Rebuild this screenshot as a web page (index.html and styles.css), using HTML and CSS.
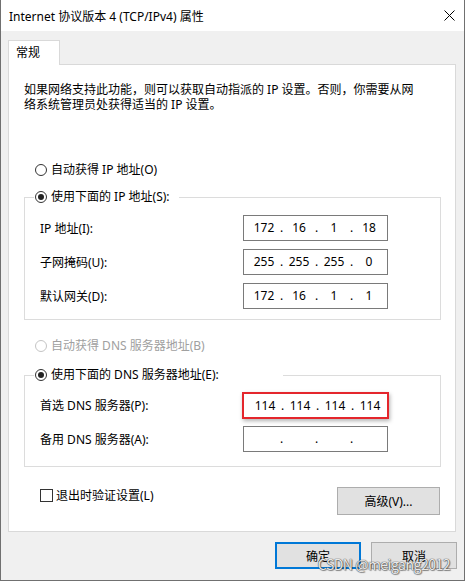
FILE: index.html
```html
<!DOCTYPE html>
<html lang="zh-CN">
<head>
  <meta charset="UTF-8">
  <title>Internet 协议版本 4 (TCP/IPv4) 属性</title>
  <link rel="stylesheet" href="styles.css">
</head>
<body>
  <div class="window">
    <div class="titlebar">
      <span class="title">Internet 协议版本 4 (TCP/IPv4) 属性</span>
      <svg class="close" width="11" height="11" viewBox="0 0 11 11">
        <path d="M0.5 0.5 L10.5 10.5 M10.5 0.5 L0.5 10.5" stroke="#000" stroke-width="1" fill="none"/>
      </svg>
    </div>

    <div class="body">
      <div class="tab">常规</div>

      <div class="panel">
        <p class="intro">如果网络支持此功能，则可以获取自动指派的 IP 设置。否则，你需要从网<br>络系统管理员处获得适当的 IP 设置。</p>

        <div class="radio first"><span class="mark"></span>自动获得 IP 地址(O)</div>

        <fieldset class="group ip-group">
          <legend class="legend-ip"><div class="radio"><span class="mark on"></span>使用下面的 IP 地址(S):</div></legend>
          <div class="row">
            <span class="label">IP 地址(I):</span>
            <div class="ipbox"><span>172</span><i>.</i><span>16</span><i>.</i><span>1</span><i>.</i><span>18</span></div>
          </div>
          <div class="row">
            <span class="label">子网掩码(U):</span>
            <div class="ipbox"><span>255</span><i>.</i><span>255</span><i>.</i><span>255</span><i>.</i><span>0</span></div>
          </div>
          <div class="row">
            <span class="label">默认网关(D):</span>
            <div class="ipbox"><span>172</span><i>.</i><span>16</span><i>.</i><span>1</span><i>.</i><span>1</span></div>
          </div>
        </fieldset>

        <div class="radio disabled dns-auto"><span class="mark"></span>自动获得 DNS 服务器地址(B)</div>

        <fieldset class="group dns-group">
          <legend class="legend-dns"><div class="radio"><span class="mark on"></span>使用下面的 DNS 服务器地址(E):</div></legend>
          <div class="row">
            <span class="label">首选 DNS 服务器(P):</span>
            <div class="ipbox marked"><span>114</span><i>.</i><span>114</span><i>.</i><span>114</span><i>.</i><span>114</span></div>
          </div>
          <div class="row">
            <span class="label">备用 DNS 服务器(A):</span>
            <div class="ipbox"><span></span><i>.</i><span></span><i>.</i><span></span><i>.</i><span></span></div>
          </div>
        </fieldset>

        <div class="panel-foot">
          <div class="check"><span class="box"></span>退出时验证设置(L)</div>
          <button class="btn advanced">高级(V)...</button>
        </div>
      </div>

      <div class="actions">
        <button class="btn default">确定</button>
        <button class="btn">取消</button>
      </div>
    </div>

    <div class="watermark">CSDN @meigang2012</div>
  </div>
</body>
</html>
```

FILE: styles.css
```css
body {
  margin: 0;
  font-family: 'Noto Sans', 'Noto Sans CJK SC', sans-serif;
  font-size: 12px;
  color: #000;
  background: #fff;
}
.window {
  position: relative;
  width: 465px;
  height: 581px;
  box-sizing: border-box;
  border: 1px solid #707070;
  border-top: none;
  background: #f0f0f0;
  display: flex;
  flex-direction: column;
}
.titlebar {
  height: 31px;
  flex: none;
  background: #fff;
  display: flex;
  align-items: center;
  justify-content: space-between;
  padding: 0 9px 0 8px;
}
.close {
  margin-top: -1px;
}
.body {
  padding: 9px 7px 0 7px;
}
.tab {
  position: relative;
  z-index: 1;
  width: 52px;
  height: 25px;
  box-sizing: border-box;
  border: 1px solid #d9d9d9;
  border-bottom: none;
  background: #fff;
  padding: 4px 0 0 7px;
  line-height: 16px;
}
.panel {
  margin-top: -1px;
  width: 448px;
  height: 468px;
  box-sizing: border-box;
  border: 1px solid #d9d9d9;
  background: #fff;
  padding: 0 14px 0 15px;
}
.intro {
  margin: 17px 0 0 0;
  line-height: 15px;
}
.radio {
  display: flex;
  align-items: center;
  height: 20px;
  line-height: 20px;
  white-space: nowrap;
}
.radio.first {
  margin: 48px 0 0 11px;
}
.radio.dns-auto {
  margin: 16px 0 0 11px;
}
.radio.disabled {
  color: #a0a0a0;
}
.mark {
  width: 12px;
  height: 12px;
  box-sizing: border-box;
  border: 1px solid #333;
  border-radius: 50%;
  margin-right: 4px;
  display: flex;
  align-items: center;
  justify-content: center;
  background: #fff;
}
.mark.on::after {
  content: "";
  width: 6px;
  height: 6px;
  border-radius: 50%;
  background: #222;
}
.disabled .mark {
  border-color: #c4c4c4;
}
.group {
  margin: 7px 0 0 0;
  min-inline-size: 0;
  border: 1px solid #dcdcdc;
  padding: 8px 14px 10px 15px;
}
.dns-group {
  margin-top: 9px;
  padding-top: 7px;
  padding-bottom: 14px;
}
.group legend {
  padding: 0 0 0 1px;
  margin-left: -6px;
  background: #fff;
}
.legend-ip {
  width: 144px;
}
.legend-dns {
  width: 248px;
}
.row {
  display: grid;
  grid-template-columns: 203px 145px;
  grid-template-rows: 26px;
  align-items: center;
  margin-bottom: 8px;
}
.row:last-child {
  margin-bottom: 0;
}
.ipbox {
  height: 26px;
  box-sizing: border-box;
  border: 1px solid #7a7a7a;
  display: flex;
  align-items: center;
  padding-left: 6px;
  line-height: 16px;
}
.ipbox span {
  width: 28px;
  text-align: center;
}
.ipbox i {
  font-style: normal;
  width: 7px;
  text-align: center;
}
.ipbox.marked {
  align-self: start;
  width: 147px;
  height: 27px;
  margin-left: -1px;
  padding-left: 7px;
  border: 2px solid #e4262c;
  box-shadow: 1px 2px 4px rgba(0, 0, 0, 0.3);
}
.panel-foot {
  margin-top: 18px;
  display: flex;
  justify-content: space-between;
  align-items: flex-start;
}
.check {
  display: flex;
  align-items: center;
  height: 20px;
  margin: 0 0 0 16px;
}
.box {
  width: 13px;
  height: 13px;
  box-sizing: border-box;
  border: 1px solid #333;
  margin-right: 3px;
}
.btn {
  font-family: inherit;
  font-size: 12px;
  color: #000;
  background: #e1e1e1;
  border: 1px solid #adadad;
  padding: 0;
  height: 27px;
  width: 86px;
  box-sizing: border-box;
}
.advanced {
  width: 103px;
  height: 28px;
  margin: 2px 1px 0 0;
}
.actions {
  margin-top: 10px;
  display: flex;
  justify-content: flex-end;
  gap: 10px;
}
.btn.default {
  border: 2px solid #0078d7;
}
.watermark {
  position: absolute;
  right: 14px;
  bottom: 7px;
  font-family: 'Noto Sans CJK SC', sans-serif;
  font-size: 14px;
  letter-spacing: -0.5px;
  line-height: 18px;
  color: rgba(255, 255, 255, 0.9);
  text-shadow: 0 0 1px #444, 0 0 1px #444, 1px 1px 1px rgba(0, 0, 0, 0.4);
}
```
